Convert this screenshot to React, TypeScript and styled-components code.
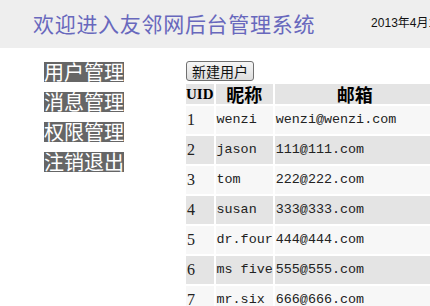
import React from "react";
import styled, { createGlobalStyle } from "styled-components";

const GlobalStyle = createGlobalStyle`
  html, body {
    margin: 0;
    padding: 0;
    background: #ffffff;
    overflow: hidden;
  }
  body {
    font-family: "Liberation Serif", "Noto Sans CJK SC", serif;
  }
`;

const Page = styled.div`
  width: 430px;
  height: 306px;
  overflow: hidden;
`;

const Header = styled.header`
  height: 48px;
  background: #eeeeee;
  display: flex;
  align-items: center;
  padding-left: 33px;
  white-space: nowrap;
  overflow: hidden;
`;

const Title = styled.h1`
  margin: 0;
  font-family: "Noto Sans CJK SC", sans-serif;
  font-size: 21px;
  font-weight: normal;
  color: #6868bd;
  line-height: 24px;
  margin-top: -3px;
  letter-spacing: 0.7px;
`;

const DateText = styled.span`
  margin-left: 56px;
  font-family: "Liberation Sans", "Noto Sans CJK SC", sans-serif;
  font-size: 12px;
  color: #111111;
  margin-top: -5px;
`;

const Body = styled.div`
  display: flex;
  padding-top: 13px;
`;

const Sidebar = styled.nav`
  flex: 0 0 140px;
  padding-left: 44px;
  padding-top: 1px;
  display: flex;
  flex-direction: column;
  align-items: flex-start;
  gap: 10px;
`;

const MenuItem = styled.a`
  display: block;
  background: #666666;
  color: #ffffff;
  font-family: "Noto Sans CJK SC", sans-serif;
  font-size: 20px;
  line-height: 20px;
  height: 20px;
  text-decoration: none;
`;

const Main = styled.main`
  flex: 0 0 auto;
  display: flex;
  flex-direction: column;
`;

const NewButton = styled.button`
  margin-left: 2px;
  align-self: flex-start;
  height: 20px;
  padding: 0 5px;
  font-family: "Noto Sans CJK SC", sans-serif;
  font-size: 14px;
  line-height: 16px;
  color: #111111;
  background: linear-gradient(#f6f6f6, #dddddd);
  border: 1px solid #707070;
  border-radius: 3px;
`;

const Table = styled.table`
  border-spacing: 2px;
  margin-top: 1px;
  white-space: nowrap;
`;

const HeadCell = styled.th<{ $w: number; $latin?: boolean }>`
  width: ${(p) => p.$w}px;
  min-width: ${(p) => p.$w}px;
  height: 20px;
  padding: 0;
  background: #e4e4e4;
  color: #000000;
  font-family: ${(p) =>
    p.$latin ? `"Liberation Serif", serif` : `"Noto Sans CJK SC", sans-serif`};
  font-size: ${(p) => (p.$latin ? "15px" : "18px")};
  font-weight: bold;
  line-height: 20px;
  text-align: center;
`;

const Row = styled.tr<{ $alt: boolean }>`
  background: ${(p) => (p.$alt ? "#e4e4e4" : "#f7f7f7")};
`;

const Cell = styled.td<{ $serif?: boolean }>`
  height: 28px;
  padding: 0 0 0 1px;
  font-family: ${(p) =>
    p.$serif ? `"Liberation Serif", serif` : `"Liberation Mono", monospace`};
  font-size: ${(p) => (p.$serif ? "16px" : "13.4px")};
  line-height: 16px;
  color: #222222;
  text-align: left;
`;

const menu = ["用户管理", "消息管理", "权限管理", "注销退出"];

const users = [
  { uid: 1, name: "wenzi", email: "wenzi@wenzi.com" },
  { uid: 2, name: "jason", email: "111@111.com" },
  { uid: 3, name: "tom", email: "222@222.com" },
  { uid: 4, name: "susan", email: "333@333.com" },
  { uid: 5, name: "dr.four", email: "444@444.com" },
  { uid: 6, name: "ms five", email: "555@555.com" },
  { uid: 7, name: "mr.six", email: "666@666.com" },
];

export default function App() {
  return (
    <Page>
      <GlobalStyle />
      <Header>
        <Title>欢迎进入友邻网后台管理系统</Title>
        <DateText>2013年4月17日 星期三</DateText>
      </Header>
      <Body>
        <Sidebar>
          {menu.map((m) => (
            <MenuItem key={m} href="#">
              {m}
            </MenuItem>
          ))}
        </Sidebar>
        <Main>
          <NewButton>新建用户</NewButton>
          <Table>
            <thead>
              <tr>
                <HeadCell $w={27} $latin>
                  UID
                </HeadCell>
                <HeadCell $w={57}>昵称</HeadCell>
                <HeadCell $w={160}>邮箱</HeadCell>
              </tr>
            </thead>
            <tbody>
              {users.map((u, i) => (
                <Row key={u.uid} $alt={i % 2 === 1}>
                  <Cell $serif>{u.uid}</Cell>
                  <Cell>{u.name}</Cell>
                  <Cell>{u.email}</Cell>
                </Row>
              ))}
            </tbody>
          </Table>
        </Main>
      </Body>
    </Page>
  );
}
